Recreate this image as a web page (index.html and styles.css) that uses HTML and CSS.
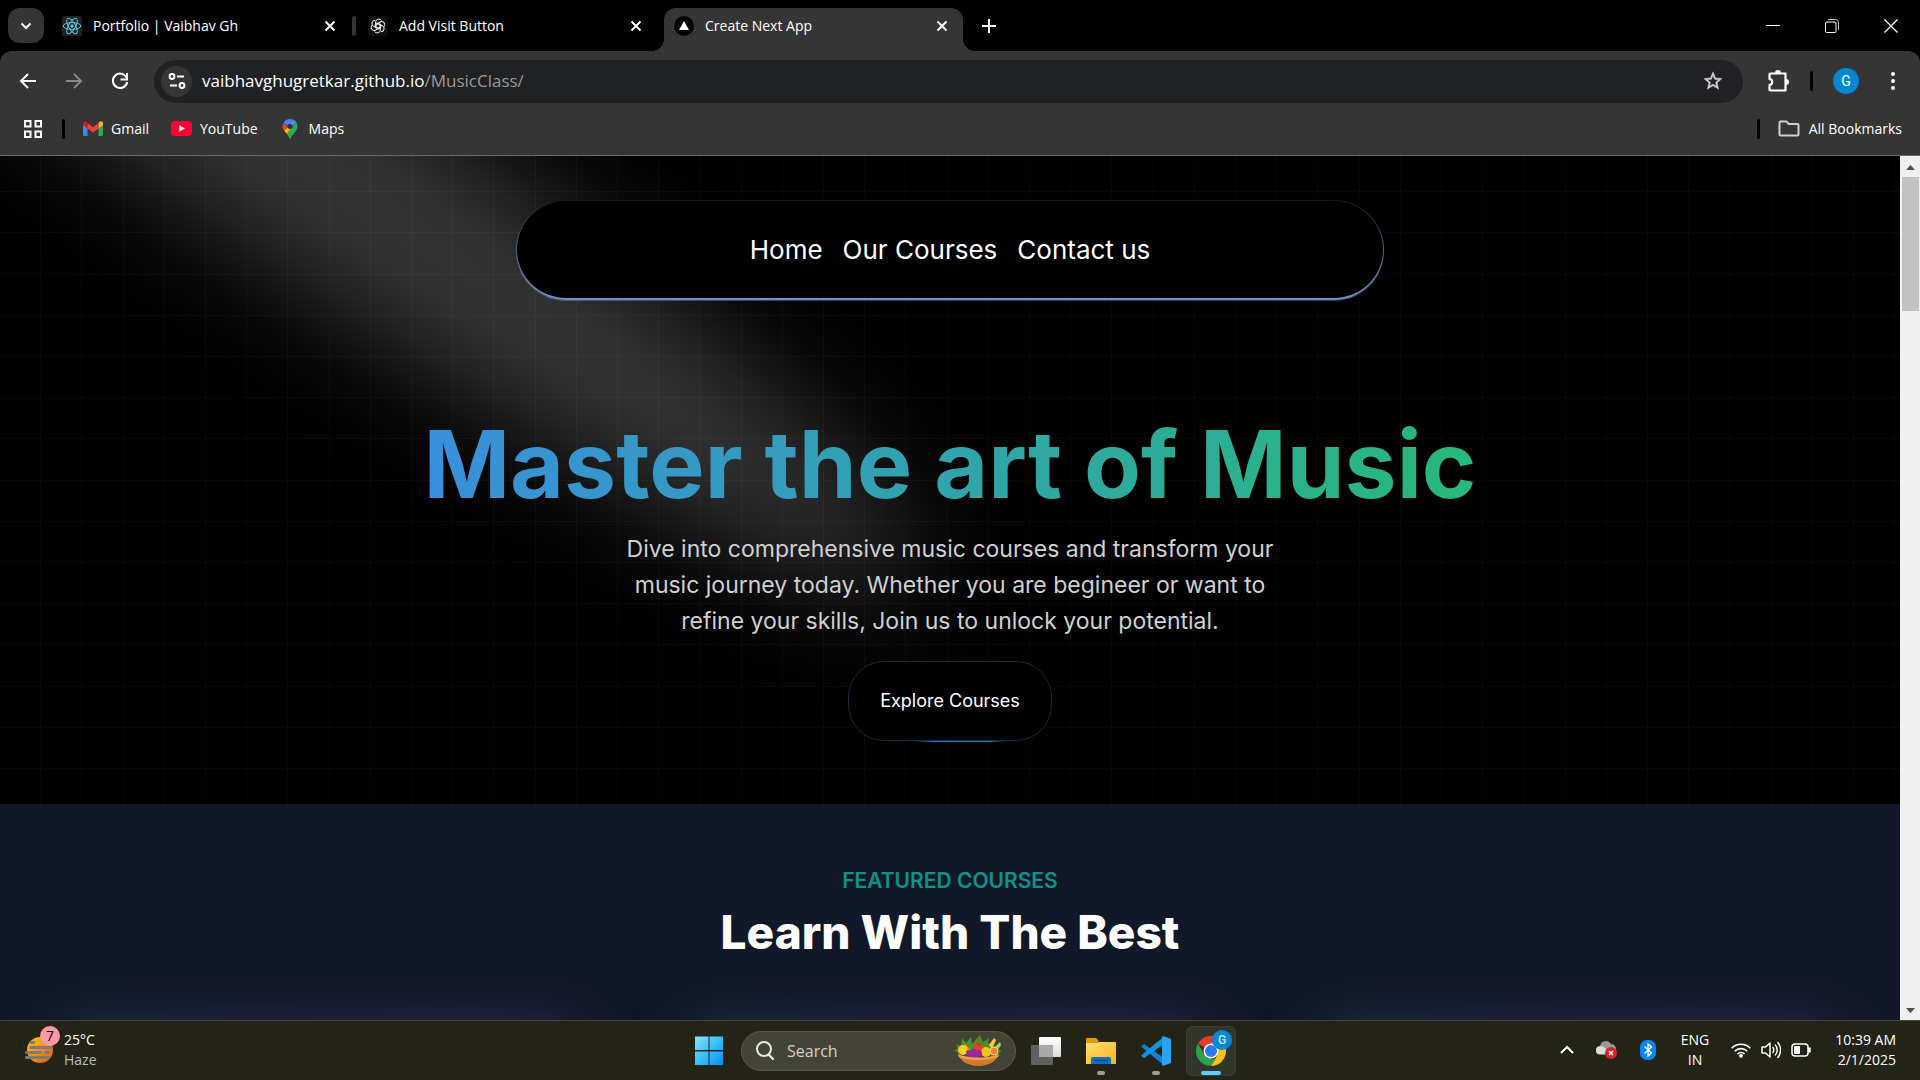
FILE: index.html
```html
<!DOCTYPE html>
<html lang="en">
<head>
<meta charset="utf-8">
<title>Create Next App</title>
<link rel="stylesheet" href="styles.css">
</head>
<body>
<header class="browser">
  <div class="tabstrip">
    <button class="tab-search" aria-label="Search tabs"><svg width="14" height="14" viewBox="0 0 14 14"><path d="M2.500 4.500L7 9l4.500-4.500" fill="none" stroke="#fff" stroke-width="2"/></svg></button>
    <div class="tabs">
      <div class="tab">
        <svg class="favicon" viewBox="0 0 20 20"><rect width="20" height="20" rx="2" fill="#222"/><g fill="none" stroke="#58c4dc" stroke-width="1"><ellipse cx="10" cy="10" rx="8.800" ry="3.400"/><ellipse cx="10" cy="10" rx="8.800" ry="3.400" transform="rotate(60 10 10)"/><ellipse cx="10" cy="10" rx="8.800" ry="3.400" transform="rotate(120 10 10)"/></g><circle cx="10" cy="10" r="1.700" fill="#58c4dc"/></svg>
        <span class="tab-title">Portfolio | Vaibhav Gh</span>
        <button class="tab-close" aria-label="Close tab"><svg width="12" height="12" viewBox="0 0 12 12"><path d="M1.500 1.500l9 9m0-9l-9 9" stroke="#fff" stroke-width="2"/></svg></button>
      </div>
      <div class="tab tab-divided">
        <svg class="favicon" viewBox="0 0 20 20"><rect width="20" height="20" rx="4" fill="#101010"/><g fill="none" stroke="#ececec" stroke-width="1"><path id="petal" d="M7.600 12.200V6.100a3.200 3.200 0 0 1 6-1.400M7.600 9.200l4.600-2.700"/><use href="#petal" transform="rotate(60 10 10)"/><use href="#petal" transform="rotate(120 10 10)"/><use href="#petal" transform="rotate(180 10 10)"/><use href="#petal" transform="rotate(240 10 10)"/><use href="#petal" transform="rotate(300 10 10)"/></g></svg>
        <span class="tab-title">Add Visit Button</span>
        <button class="tab-close" aria-label="Close tab"><svg width="12" height="12" viewBox="0 0 12 12"><path d="M1.500 1.500l9 9m0-9l-9 9" stroke="#fff" stroke-width="2"/></svg></button>
      </div>
      <div class="tab tab-active">
        <svg class="favicon" viewBox="0 0 20 20"><circle cx="10" cy="10" r="10" fill="#000"/><path d="M10 5l5 9H5z" fill="#fff"/></svg>
        <span class="tab-title">Create Next App</span>
        <button class="tab-close" aria-label="Close tab"><svg width="12" height="12" viewBox="0 0 12 12"><path d="M1.500 1.500l9 9m0-9l-9 9" stroke="#fff" stroke-width="2"/></svg></button>
      </div>
    </div>
    <button class="new-tab" aria-label="New tab"><svg width="14" height="14" viewBox="0 0 14 14"><path d="M7 0v14M0 7h14" stroke="#fff" stroke-width="2"/></svg></button>
    <div class="window-controls">
      <button aria-label="Minimize"><svg width="14" height="14" viewBox="0 0 14 14"><path d="M0 6.500h14" stroke="#fff"/></svg></button>
      <button aria-label="Restore"><svg width="14" height="14" viewBox="0 0 14 14"><g fill="none" stroke="#fff"><rect x=".5" y="3" width="10.500" height="10.500" rx="1"/><path d="M3 .5h7.500a3 3 0 0 1 3 3v7.500" stroke="#bbb"/></g></svg></button>
      <button aria-label="Close"><svg width="14" height="14" viewBox="0 0 14 14"><path d="M.5.5l13 13m0-13l-13 13" stroke="#fff" stroke-width="1.300"/></svg></button>
    </div>
  </div>
  <div class="toolbar">
    <div class="nav-buttons">
      <button aria-label="Back"><svg width="20" height="20" viewBox="0 0 20 20"><path d="M18 10H3m7-7l-7 7 7 7" fill="none" stroke="#fff" stroke-width="2"/></svg></button>
      <button aria-label="Forward"><svg width="20" height="20" viewBox="0 0 20 20"><path d="M2 10h15m-7-7l7 7-7 7" fill="none" stroke="#8a8a8a" stroke-width="2"/></svg></button>
      <button aria-label="Reload"><svg width="20" height="20" viewBox="0 0 20 20"><path d="M16.500 6.500A7.200 7.200 0 1 0 17.200 11" fill="none" stroke="#fff" stroke-width="2"/><path d="M17 2v6.500h-6.500" fill="none" stroke="#fff" stroke-width="2"/></svg></button>
    </div>
    <div class="omnibox">
      <button class="site-info" aria-label="Site information"><svg width="18" height="18" viewBox="0 0 18 18"><g fill="none" stroke="#fff" stroke-width="2"><circle cx="4" cy="4.500" r="2.400"/><path d="M9 4.500h7M2 13.500h7"/><circle cx="14" cy="13.500" r="2.400"/></g></svg></button>
      <span class="url">vaibhavghugretkar.github.io<span class="url-path">/MusicClass/</span></span>
      <button class="star" aria-label="Bookmark this tab"><svg width="22" height="22" viewBox="0 0 24 24"><path d="M22 9.240l-7.190-.62L12 2 9.190 8.630 2 9.240l5.460 4.730L5.820 21 12 17.270 18.180 21l-1.630-7.030L22 9.240zM12 15.400l-3.760 2.270 1-4.280-3.320-2.880 4.380-.38L12 6.100l1.710 4.040 4.380.38-3.320 2.880 1 4.280L12 15.400z" fill="#d0d0d0" stroke="#d0d0d0" stroke-width=".5"/></svg></button>
    </div>
    <div class="toolbar-actions">
      <button aria-label="Extensions"><svg width="24" height="24" viewBox="0 0 24 24"><path d="M3.500 5.500a1 1 0 0 1 1-1h15v17h-15a1 1 0 0 1-1-1v-4.600c3.600 0 3.600-5.800 0-5.800z" fill="none" stroke="#fff" stroke-width="2.200" stroke-linejoin="round"/><path d="M9 4a3 3 0 0 1 6 0zM20 10a3 3 0 0 1 0 6z" fill="#fff"/></svg></button>
      <span class="divider"></span>
      <button class="avatar">G</button>
      <button aria-label="Menu"><svg width="20" height="20" viewBox="0 0 20 20" fill="#fff"><circle cx="10" cy="3" r="2"/><circle cx="10" cy="10" r="2"/><circle cx="10" cy="17" r="2"/></svg></button>
    </div>
  </div>
  <nav class="bookmarks">
    <button class="apps" aria-label="Apps"><svg width="18" height="18" viewBox="0 0 18 18"><g fill="none" stroke="#fff" stroke-width="2"><rect x="1" y="1" width="5.500" height="5.500"/><rect x="11.500" y="1" width="5.500" height="5.500"/><rect x="1" y="11.500" width="5.500" height="5.500"/><rect x="11.500" y="11.500" width="5.500" height="5.500"/></g></svg></button>
    <span class="divider"></span>
    <a href="#"><svg width="20" height="16" viewBox="0 0 20 16"><path d="M0 3v10.500A1.500 1.500 0 0 0 1.500 15H4.500V6z" fill="#4285f4"/><path d="M20 3v10.500A1.500 1.500 0 0 1 18.500 15H15.500V6z" fill="#34a853"/><path d="M15.500 2v5.500L20 4V2.500C20 .5 17.800-.4 16.300.8z" fill="#fbbc04"/><path d="M4.500 7.500V2L10 6.200 15.500 2v5.500L10 11.600z" fill="#ea4335"/><path d="M0 2.500V4l4.500 3.500V2L3.700.8C2.200-.4 0 .5 0 2.500z" fill="#c5221f"/></svg>Gmail</a>
    <a href="#"><svg width="21" height="15" viewBox="0 0 21 15"><rect width="21" height="15" rx="4" fill="#f03"/><path d="M8.300 4.300v6.400l5.600-3.200z" fill="#fff"/></svg>YouTube</a>
    <a href="#" class="maps"><svg width="16" height="20" viewBox="0 0 16 20"><path d="M1.500 4L6 8 2.500 12C.5 9.500-.5 7 1.500 4z" fill="#ea4335"/><path d="M8 0C5 0 2.800 1.400 1.500 3.500L6 7.500 11.300.8A8 8 0 0 0 8 0z" fill="#4285f4"/><path d="M11 .7L5.500 7l3 2.500 6-6.300A7.500 7.500 0 0 0 11 .7z" fill="#4c8df6"/><path d="M2.300 11.800L10 4.300 9.500 9l-4.700 6z" fill="#fbbc04"/><path d="M14.500 3.200L4.600 14.800C6.300 17 7 18 7.400 19.500c.2.700 1 .7 1.200 0C9.400 16 15.500 12.500 15.500 7.500c0-1.600-.4-3.100-1-4.300z" fill="#34a853"/><circle cx="8" cy="7.300" r="2.600" fill="#353535"/></svg>Maps</a>
    <span class="spacer"></span>
    <span class="divider"></span>
    <a href="#" class="all-bookmarks"><svg width="22" height="17" viewBox="0 0 22 17"><path d="M2.500 1.500h6l2.300 2.500H19.500a1 1 0 0 1 1 1v9.500a1 1 0 0 1-1 1h-17a1 1 0 0 1-1-1v-12a1 1 0 0 1 1-1z" fill="none" stroke="#d0d0d0" stroke-width="2"/></svg>All Bookmarks</a>
  </nav>
</header>

<div class="viewport">
  <main class="page">
    <section class="hero">
      <svg class="spotlight" viewBox="0 0 3787 2842" fill="none" aria-hidden="true">
        <defs><filter id="soft" x="-20%" y="-20%" width="140%" height="140%"><feGaussianBlur stdDeviation="151"/></filter></defs>
        <g filter="url(#soft)"><ellipse cx="1924.710" cy="273.501" rx="1924.710" ry="273.501" transform="matrix(-0.822377 -0.568943 -0.568943 0.822377 3631.880 2291.090)" fill="#fff" fill-opacity=".21"/></g>
      </svg>
      <nav class="site-nav">
        <a href="#">Home</a>
        <a href="#">Our Courses</a>
        <a href="#">Contact us</a>
      </nav>
      <h1>Master the art of Music</h1>
      <p>Dive into comprehensive music courses and transform your music journey today. Whether you are begineer or want to refine your skills, Join us to unlock your potential.</p>
      <button class="explore">Explore Courses</button>
    </section>
    <section class="featured">
      <h2>FEATURED COURSES</h2>
      <p>Learn With The Best</p>
      <div class="cards"><article></article><article></article><article></article></div>
    </section>
  </main>
  <div class="scrollbar" aria-hidden="true">
    <svg width="20" height="21" viewBox="0 0 20 21"><path d="M6 14l4.500-5 4.500 5z" fill="#505050"/></svg>
    <span class="thumb"></span>
    <svg width="20" height="21" viewBox="0 0 20 21"><path d="M6 9l4.500 5L15 9z" fill="#505050"/></svg>
  </div>
</div>

<footer class="taskbar">
  <button class="weather">
    <span class="weather-icon">
      <svg width="30" height="28" viewBox="0 0 30 28"><defs><linearGradient id="sun" x1="0" y1="0" x2="1" y2="1"><stop offset="0" stop-color="#fc0"/><stop offset="1" stop-color="#e8590c"/></linearGradient></defs><circle cx="15" cy="14" r="13" fill="url(#sun)"/><g stroke="#7b7b7b" stroke-width="3" stroke-linecap="round"><path d="M6 6.500h3M6 11.500h20M1.500 16.500h14M20.500 16.500h3M1.500 21.500h22"/></g></svg>
      <span class="badge">7</span>
    </span>
    <span class="weather-text"><span>25°C</span><span class="muted">Haze</span></span>
  </button>
  <div class="apps-row">
    <button class="app" aria-label="Start"><svg width="30" height="30" viewBox="0 0 30 30"><defs><linearGradient id="win" x1="0" y1="0" x2="1" y2="1"><stop offset="0" stop-color="#8be0ff"/><stop offset=".5" stop-color="#38c0fb"/><stop offset="1" stop-color="#0a8cf5"/></linearGradient></defs><path d="M1 .5h13.500V14H1zM15.500.5H29V14H15.500zM1 15.500h13.500V29H1zM15.500 15.500H29V29H15.500z" fill="url(#win)"/></svg></button>
    <label class="search">
      <svg width="20" height="20" viewBox="0 0 20 20"><circle cx="9" cy="8" r="7" fill="none" stroke="#e8e8e8" stroke-width="2"/><path d="M13.500 13.500L18 18" stroke="#e8e8e8" stroke-width="2.400" stroke-linecap="round"/></svg>
      <input type="text" placeholder="Search" aria-label="Search">
      <svg class="basket" width="50" height="32" viewBox="0 0 50 32"><path d="M4 17L1 15l4-1-2-5 5 2 1-8 4 5 5-6 1 7 8-9 3 7 6-4-1 6 6-3-1 5 7-1-2 5 4 1-7 5z" fill="#4a8f2c"/><path d="M11 7l9 11-5 1z" fill="#f5821f"/><path d="M36 10l5-7 2 2-4 9z" fill="#f7d038"/><path d="M42 12l5-5 1 3-4 6z" fill="#a6cf54"/><circle cx="25" cy="12" r="5" fill="#e2402a"/><path d="M22 7l4 2 4-2-4 4z" fill="#2e7d32"/><circle cx="10" cy="15" r="5" fill="#fbcf1b"/><circle cx="33" cy="17" r="5" fill="#f9c216"/><circle cx="41" cy="16" r="4" fill="#f58231" stroke="#fbd18a"/><g fill="#9c27a0"><circle cx="16" cy="18" r="3"/><circle cx="21" cy="17" r="3"/><circle cx="26" cy="18" r="3"/><circle cx="17" cy="21" r="3"/><circle cx="23" cy="21" r="3"/></g><path d="M5 19c4 2 8 3 13 3.500h14c5-.5 10-1.500 14-3.500-2 7-10 12-20.500 12S7 26 5 19z" fill="#d07a2d"/><path d="M5 19c10 5 31 5 41 0l-1 3c-10 4-29 4-39 0z" fill="#eda552"/></svg>
    </label>
    <button class="app" aria-label="Task view"><svg width="30" height="30" viewBox="0 0 30 30"><defs><linearGradient id="white" x1="0" y1="0" x2="0" y2="1"><stop offset="0" stop-color="#fff"/><stop offset="1" stop-color="#dcdcdc"/></linearGradient></defs><rect x="8" y="1" width="22" height="20" rx="1" fill="url(#white)"/><rect y="9" width="22" height="20" rx="1" fill="#616161"/><rect x="8" y="9" width="14" height="12" fill="#a9a9a9"/></svg></button>
    <button class="app running" aria-label="File Explorer"><svg width="30" height="28" viewBox="0 0 30 28"><defs><linearGradient id="fold" x1="0" y1="0" x2="1" y2="1"><stop offset="0" stop-color="#ffdf75"/><stop offset="1" stop-color="#f9b514"/></linearGradient></defs><path d="M0 2a1 1 0 0 1 1-1h9l3 3h-1v5H0z" fill="#d99b0b"/><path d="M0 6h11l2-1h16a1 1 0 0 1 1 1v21H0z" fill="url(#fold)"/><path d="M5 27v-5a2 2 0 0 1 2-2h16a2 2 0 0 1 2 2v5z" fill="#0c70c4"/><path d="M8 23.500h14" stroke="#064a8c" stroke-width="1.500"/></svg></button>
    <button class="app running" aria-label="Visual Studio Code"><svg width="30" height="30" viewBox="0 0 30 30"><path d="M0 10.500L3 8l20 14v7.500z" fill="#0b83d1"/><path d="M0 19.500L3 22 23 8V.5z" fill="#1592e0"/><path d="M22 0l8 3v24l-8 3-1-1V1z" fill="#2aa3f3"/></svg></button>
    <button class="app running current" aria-label="Google Chrome"><svg width="30" height="30" viewBox="0 0 30 30"><path d="M15 15L2 7.500A15 15 0 0 1 28 7.500z" fill="#e33b2e"/><path d="M15 15l0-7.500h13A15 15 0 0 1 15 30l6.500-11z" fill="#fbc116"/><path d="M2 7.500L8.500 18.800 15 22.500l4 0L15 30A15 15 0 0 1 2 7.500z" fill="#2da14a"/><circle cx="15" cy="15" r="7.500" fill="#fff"/><circle cx="15" cy="15" r="6" fill="#2f78ec"/></svg><span class="profile-badge">G</span></button>
  </div>
  <div class="tray">
    <button aria-label="Show hidden icons"><svg width="14" height="10" viewBox="0 0 14 10"><path d="M1 8l6-6 6 6" fill="none" stroke="#fff" stroke-width="2"/></svg></button>
    <svg class="cloud" width="22" height="18" viewBox="0 0 22 18"><path d="M4 13a4 4 0 0 1 0-8 6 6 0 0 1 11-2 5 5 0 0 1 3 9z" fill="#9a9a9a"/><path d="M4 13.500a4 4 0 0 1 0-8c4-1 6 2 10 8z" fill="#ddd"/><circle cx="15" cy="12" r="6" fill="#d9202c"/><path d="M13 10l4 4m0-4l-4 4" stroke="#fff" stroke-width="1.400"/></svg>
    <svg class="bluetooth" width="16" height="20" viewBox="0 0 16 20"><rect width="16" height="20" rx="7" fill="#0a84ff"/><path d="M4.500 6.500l7 6.500L8 16V4l3.500 3-7 6.500" fill="none" stroke="#fff" stroke-width="1.300"/></svg>
    <button class="lang"><span>ENG</span><span>IN</span></button>
    <button class="status" aria-label="Network, sound and battery">
      <svg width="20" height="16" viewBox="0 0 20 16"><g fill="none" stroke="#fff" stroke-width="1.600"><path d="M.7 6.200a13 13 0 0 1 18.600 0M3.700 9.200a9 9 0 0 1 12.600 0M6.500 12a5 5 0 0 1 7 0"/></g><circle cx="10" cy="13.800" r="1.900" fill="#fff"/></svg>
      <svg width="20" height="18" viewBox="0 0 20 18"><path d="M1 6h3.500L9 2v14l-4.500-4H1z" fill="none" stroke="#fff" stroke-width="1.500" stroke-linejoin="round"/><path d="M11.500 6a4 4 0 0 1 0 6M14 3.500a8 8 0 0 1 0 11M16.500 1a12 12 0 0 1 0 16" fill="none" stroke="#fff" stroke-width="1.400"/></svg>
      <svg width="20" height="14" viewBox="0 0 20 14"><rect x="1" y="1" width="16" height="12" rx="3" fill="none" stroke="#fff" stroke-width="1.500"/><rect x="3" y="3" width="6" height="8" rx="1" fill="#fff"/><path d="M18.500 4.500v5" stroke="#fff" stroke-width="2.500"/></svg>
    </button>
    <button class="clock"><span>10:39 AM</span><span>2/1/2025</span></button>
  </div>
</footer>
</body>
</html>
```
FILE: styles.css
```css
* { box-sizing: border-box; }
body {
  margin: 0;
  height: 100vh;
  display: flex;
  flex-direction: column;
  overflow: hidden;
  background: #000;
  color: #fff;
  font: 14px/20px "Open Sans", "Noto Sans", sans-serif;
}
button {
  display: flex;
  align-items: center;
  justify-content: center;
  padding: 0;
  border: 0;
  background: none;
  color: inherit;
  font: inherit;
}
a { color: inherit; text-decoration: none; }
svg { flex: none; }

/* browser frame */
.browser {
  flex: none;
  background: #000;
  border-bottom: 1px solid #6b6b6b;
}
.tabstrip {
  display: flex;
  height: 51px;
  padding: 8px 0 0 8px;
}
.tab-search {
  width: 36px;
  height: 35px;
  border-radius: 12px;
  background: #353535;
}
.tabs {
  display: flex;
  gap: 7px;
  margin-left: 8px;
}
.tab {
  position: relative;
  display: flex;
  align-items: center;
  gap: 11px;
  width: 299px;
  padding: 0 15px 7px 10px;
}
.tab-divided::before {
  content: "";
  position: absolute;
  left: -6px;
  top: 8px;
  width: 4px;
  height: 20px;
  border-radius: 2px;
  background: #353535;
}
.tab-active {
  border-radius: 12px 12px 0 0;
  background: #353535;
}
.tab-active::before,
.tab-active::after {
  content: "";
  position: absolute;
  bottom: 0;
  width: 12px;
  height: 12px;
}
.tab-active::before {
  left: -12px;
  background: radial-gradient(circle at 0 0, transparent 12px, #353535 12px);
}
.tab-active::after {
  right: -12px;
  background: radial-gradient(circle at 100% 0, transparent 12px, #353535 12px);
}
.favicon { width: 20px; height: 20px; }
.tab-title { flex: 1; white-space: nowrap; }
.new-tab { width: 36px; height: 35px; margin-left: 8px; }
.window-controls {
  display: flex;
  height: 35px;
  margin-left: auto;
}
.window-controls button { width: 59px; }

.toolbar {
  display: flex;
  align-items: center;
  height: 60px;
  padding: 0 12px 0 5px;
  border-radius: 12px 12px 0 0;
  background: #353535;
}
.nav-buttons { display: flex; }
.nav-buttons button { width: 46px; height: 36px; }
.omnibox {
  display: flex;
  flex: 1;
  align-items: center;
  height: 43px;
  margin-left: 11px;
  padding: 0 19px 0 7px;
  border-radius: 22px;
  background: #202124;
  font-size: 17px;
}
.site-info {
  width: 31px;
  height: 31px;
  border-radius: 50%;
  background: #353535;
}
.url { flex: 1; margin-left: 10px; }
.url-path { color: #9a9a9a; }
.toolbar-actions {
  display: flex;
  align-items: center;
  margin-left: 23px;
}
.divider {
  width: 3px;
  height: 20px;
  border-radius: 2px;
  background: #000;
}
.toolbar-actions .divider { margin: 0 20px; }
.avatar {
  width: 26px;
  height: 26px;
  margin-right: 19px;
  border-radius: 50%;
  background: #0288d1;
  font: 14px/20px Roboto, sans-serif;
}
.toolbar-actions button:last-child { width: 30px; }

.bookmarks {
  display: flex;
  align-items: center;
  height: 44px;
  padding: 0 18px 9px 24px;
  background: #353535;
}
.bookmarks a {
  display: flex;
  align-items: center;
  gap: 8px;
  margin-left: 22px;
}
.bookmarks a.maps { gap: 11px; margin-left: 24px; }
.bookmarks a.all-bookmarks { gap: 9px; margin-left: 21px; }
.bookmarks .divider { margin-left: 20px; }
.bookmarks .divider + a { margin-left: 18px; }
.spacer { flex: 1; }

/* viewport */
.viewport {
  display: flex;
  flex: 1;
  min-height: 0;
}
.page {
  flex: 1;
  overflow: hidden;
  font-family: Inter, sans-serif;
}
.hero {
  position: relative;
  display: flex;
  flex-direction: column;
  align-items: center;
  padding: 44px 0 63px;
  overflow: hidden;
  background: #000;
  text-align: center;
}
.hero::before {
  content: "";
  position: absolute;
  inset: 0;
  opacity: .03;
  background-image:
    linear-gradient(90deg, transparent 40px, #fff 40px 41px, transparent 41px 81px, #fff 81px 82px, transparent 82px 123px, #fff 123px 124px, transparent 124px 164px, #fff 164px 165px, transparent 165px 205px, #fff 205px),
    linear-gradient(transparent 40px, #fff 40px 41px, transparent 41px 81px, #fff 81px 82px, transparent 82px 123px, #fff 123px 124px, transparent 124px 164px, #fff 164px 165px, transparent 165px 205px, #fff 205px);
  background-size: 206px 206px;
  background-position: 0 0, 0 -5px;
}
.hero > :not(.spotlight) { position: relative; }
.spotlight {
  position: absolute;
  left: 309px;
  top: -103px;
  width: 84%;
  height: 169%;
  transform: translate(-50%, -40%);
}
.site-nav {
  display: flex;
  align-items: center;
  justify-content: center;
  gap: 20px;
  width: 868px;
  max-width: 100%;
  height: 100px;
  border: 1px solid transparent;
  border-bottom-width: 2px;
  border-radius: 50px;
  background: linear-gradient(#000, #000) padding-box, linear-gradient(#12191f, #4a6480 50%, #6f94bf) border-box;
  box-shadow: 0 1px 1px rgba(90, 130, 190, .5);
  font-size: 26px;
  line-height: 36px;
}
h1 {
  margin: 118px 0 0;
  background: linear-gradient(90deg, #3a8fdd, #27b97a);
  background-clip: text;
  color: transparent;
  font-size: 93px;
  font-weight: 700;
  line-height: 93px;
}
.hero p {
  width: 660px;
  margin: 20px 0 0;
  color: #d0d0d0;
  font-size: 23px;
  line-height: 36px;
}
.explore {
  width: 204px;
  height: 80px;
  margin-top: 22px;
  border: 1px solid #1e293b;
  border-radius: 36px;
  background: #000;
  font-size: 18px;
  line-height: 26px;
}
.explore::after {
  content: "";
  position: absolute;
  left: 66px;
  bottom: -2px;
  width: 92px;
  height: 1px;
  background: linear-gradient(90deg, transparent, #0e84c6 20% 80%, transparent);
}
.featured {
  height: 600px;
  padding-top: 61px;
  background: #111827;
  text-align: center;
}
.featured h2 {
  margin: 0;
  color: #0d9488;
  font-size: 21px;
  font-weight: 600;
  line-height: 31px;
}
.featured p {
  margin: 10px 0 0;
  font-size: 46px;
  font-weight: 800;
  line-height: 52px;
}
.cards {
  display: grid;
  grid-template-columns: repeat(3, 1fr);
  gap: 104px;
  padding: 66px 57px 0;
}
.cards article {
  height: 400px;
  border-radius: 28px;
  background: linear-gradient(90deg, #21344a, #28284f 40%, #32285a 75%, #28284f);
  filter: blur(28px);
}
.scrollbar {
  display: flex;
  flex-direction: column;
  width: 20px;
  background: #f0f0f0;
}
.thumb {
  width: 17px;
  height: 134px;
  margin: 0 auto auto 2px;
  background: #c1c1c1;
}

/* taskbar */
.taskbar {
  display: grid;
  flex: none;
  grid-template-columns: 1fr auto 1fr;
  align-items: center;
  height: 60px;
  border-top: 1px solid #45453a;
  background: #232415;
}
.weather {
  justify-self: start;
  gap: 9px;
  padding: 0 0 2px 25px;
  text-align: left;
}
.weather-icon { position: relative; height: 28px; }
.badge {
  position: absolute;
  top: -10px;
  right: -5px;
  width: 20px;
  height: 20px;
  border-radius: 50%;
  background: #ff99a4;
  color: #000;
  text-align: center;
}
.weather-text, .lang, .clock { display: flex; flex-direction: column; }
.muted { color: #bdbdb8; }
.apps-row { display: flex; align-items: center; gap: 5px; }
.app {
  position: relative;
  width: 50px;
  height: 50px;
  border-radius: 6px;
}
.running::after {
  content: "";
  position: absolute;
  bottom: 1px;
  width: 8px;
  height: 4px;
  border-radius: 2px;
  background: #9d9d95;
}
.current { background: #33342a; border: 1px solid #3d3e33; }
.current::after { width: 20px; bottom: 0; background: #60cdff; }
.profile-badge {
  position: absolute;
  top: 3px;
  right: 3px;
  width: 20px;
  height: 20px;
  border-radius: 50%;
  background: #0288d1;
  color: #cfe8f6;
  font: 500 12px/20px Roboto, sans-serif;
}
.search {
  display: flex;
  align-items: center;
  width: 275px;
  height: 40px;
  margin-left: 2px;
  padding: 0 12px 0 13px;
  border: 1px solid #5a5b4e;
  border-radius: 20px;
  background: #434436;
}
.search input {
  flex: 1;
  min-width: 0;
  margin-left: 12px;
  padding: 0;
  border: 0;
  outline: 0;
  background: none;
  color: #fff;
  font: 16px/24px "Open Sans", "Noto Sans", sans-serif;
}
.search input::placeholder { color: #d2d2cc; opacity: 1; }
.tray {
  display: flex;
  align-items: center;
  justify-self: end;
  padding: 0 24px 2px 0;
}
.cloud { margin-left: 22px; }
.bluetooth { margin-left: 22px; }
.lang { margin-left: 25px; }
.status { gap: 10px; margin-left: 22px; }
.clock { align-items: flex-end; margin-left: 24px; }
```
